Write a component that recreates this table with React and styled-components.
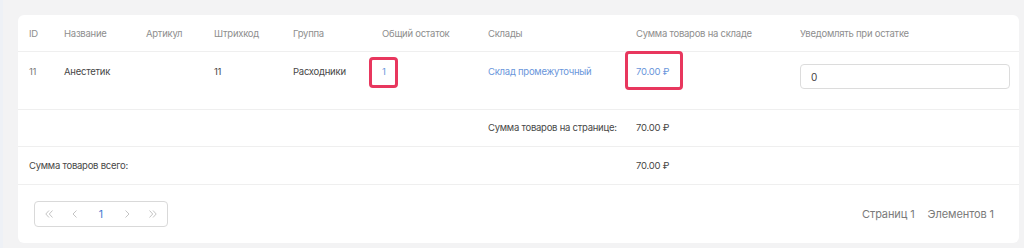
import React from 'react';
import styled, { createGlobalStyle } from 'styled-components';

const GlobalStyle = createGlobalStyle`
  html, body {
    margin: 0;
    padding: 0;
    background: #f3f3f4;
    font-family: Inter, "Noto Sans", sans-serif;
  }
`;

const Page = styled.div`
  width: 1024px;
  height: 248px;
  box-sizing: border-box;
  padding: 15px 5px 6px 15px;
  border-left: 3px solid #eef1f6;
`;

const Card = styled.div`
  background: #fff;
  border-radius: 6px;
  overflow: hidden;
`;

const Table = styled.table`
  width: 100%;
  border-collapse: collapse;
  table-layout: fixed;
  font-size: 9.5px;
  letter-spacing: -0.25px;
`;

const Th = styled.th`
  text-align: left;
  font-weight: 400;
  color: #8e8e8e;
  height: 36px;
  padding: 0 0 0 11px;
  border-bottom: 1px solid #efefef;
  white-space: nowrap;
`;

const Row = styled.tr`
  height: ${p => p.$h || 37}px;
  border-bottom: 1px solid #efefef;
`;

const Td = styled.td`
  padding: ${p => (p.$top !== undefined ? `${p.$top}px 0 0 11px` : '0 0 0 11px')};
  color: ${p => (p.$muted ? '#7a7a7a' : '#474747')};
  white-space: nowrap;
  vertical-align: ${p => (p.$top !== undefined ? 'top' : 'middle')};
  line-height: 12px;
`;

const Link = styled.span`
  color: #6a96db;
`;

const Marked = styled.span`
  position: relative;
  display: inline-block;

  &::after {
    content: '';
    position: absolute;
    top: ${p => p.$t}px;
    bottom: ${p => p.$b}px;
    left: ${p => p.$l}px;
    right: ${p => p.$r}px;
    border: 3px solid #e8375e;
    border-radius: 4px;
  }
`;

const Input = styled.input`
  display: block;
  box-sizing: border-box;
  width: 210px;
  height: 25px;
  border: 1px solid #dcdcdc;
  border-radius: 4px;
  padding: 0 10px;
  font-family: inherit;
  font-size: 10px;
  color: #444;
  outline: none;
`;

const Footer = styled.div`
  display: flex;
  align-items: center;
  justify-content: space-between;
  height: 58px;
  padding: 0 25px 0 16px;
  box-sizing: border-box;
`;

const Pager = styled.div`
  display: flex;
  align-items: center;
  height: 24px;
  border: 1px solid #d9d9d9;
  border-radius: 4px;
  padding: 0 1px;
`;

const PageBtn = styled.span`
  width: 26px;
  display: flex;
  justify-content: center;
  align-items: center;
  font-size: 10.5px;
  color: ${p => (p.$active ? '#3f78cf' : '#bdbdbd')};
`;

const Info = styled.div`
  display: flex;
  gap: 13px;
  font-size: 11px;
  letter-spacing: -0.1px;
  color: #7a7a7a;
`;

const Chevron = ({ double, dir }) => (
  <svg width="10" height="10" viewBox="0 0 10 10" fill="none" stroke="#c4c4c4" strokeWidth="1">
    {dir === 'left' ? (
      <>
        <path d={double ? 'M5 1.5 L1.8 5 L5 8.5' : 'M6.5 1.5 L3 5 L6.5 8.5'} />
        {double && <path d="M8.5 1.5 L5.3 5 L8.5 8.5" />}
      </>
    ) : (
      <>
        <path d={double ? 'M1.5 1.5 L4.7 5 L1.5 8.5' : 'M3.5 1.5 L7 5 L3.5 8.5'} />
        {double && <path d="M5 1.5 L8.2 5 L5 8.5" />}
      </>
    )}
  </svg>
);

const columns = [
  ['ID', 35],
  ['Название', 82],
  ['Артикул', 68],
  ['Штрихкод', 79],
  ['Группа', 89],
  ['Общий остаток', 106],
  ['Склады', 148],
  ['Сумма товаров на складе', 164],
  ['Уведомлять при остатке', 230],
];

export default function App() {
  return (
    <>
      <GlobalStyle />
      <Page>
        <Card>
          <Table>
            <colgroup>
              {columns.map(([name, w]) => (
                <col key={name} style={{ width: w }} />
              ))}
            </colgroup>
            <thead>
              <tr>
                {columns.map(([name]) => (
                  <Th key={name}>{name}</Th>
                ))}
              </tr>
            </thead>
            <tbody>
              <Row $h={58}>
                <Td $top={14} $muted>11</Td>
                <Td $top={14}>Анестетик</Td>
                <Td $top={14} />
                <Td $top={14}>11</Td>
                <Td $top={14}>Расходники</Td>
                <Td $top={14}>
                  <Marked $t={-9} $b={-10} $l={-13} $r={-12}>
                    <Link>1</Link>
                  </Marked>
                </Td>
                <Td $top={14}>
                  <Link>Склад промежуточный</Link>
                </Td>
                <Td $top={14}>
                  <Marked $t={-15} $b={-12} $l={-11} $r={-14}>
                    <Link>70.00 ₽</Link>
                  </Marked>
                </Td>
                <Td $top={12}>
                  <Input defaultValue="0" />
                </Td>
              </Row>
              <Row>
                <Td colSpan={6} />
                <Td>Сумма товаров на странице:</Td>
                <Td>70.00 ₽</Td>
                <Td />
              </Row>
              <Row $h={38}>
                <Td colSpan={7}>Сумма товаров всего:</Td>
                <Td>70.00 ₽</Td>
                <Td />
              </Row>
            </tbody>
          </Table>
          <Footer>
            <Pager>
              <PageBtn><Chevron dir="left" double /></PageBtn>
              <PageBtn><Chevron dir="left" /></PageBtn>
              <PageBtn $active>1</PageBtn>
              <PageBtn><Chevron dir="right" /></PageBtn>
              <PageBtn><Chevron dir="right" double /></PageBtn>
            </Pager>
            <Info>
              <span>Страниц 1</span>
              <span>Элементов 1</span>
            </Info>
          </Footer>
        </Card>
      </Page>
    </>
  );
}
